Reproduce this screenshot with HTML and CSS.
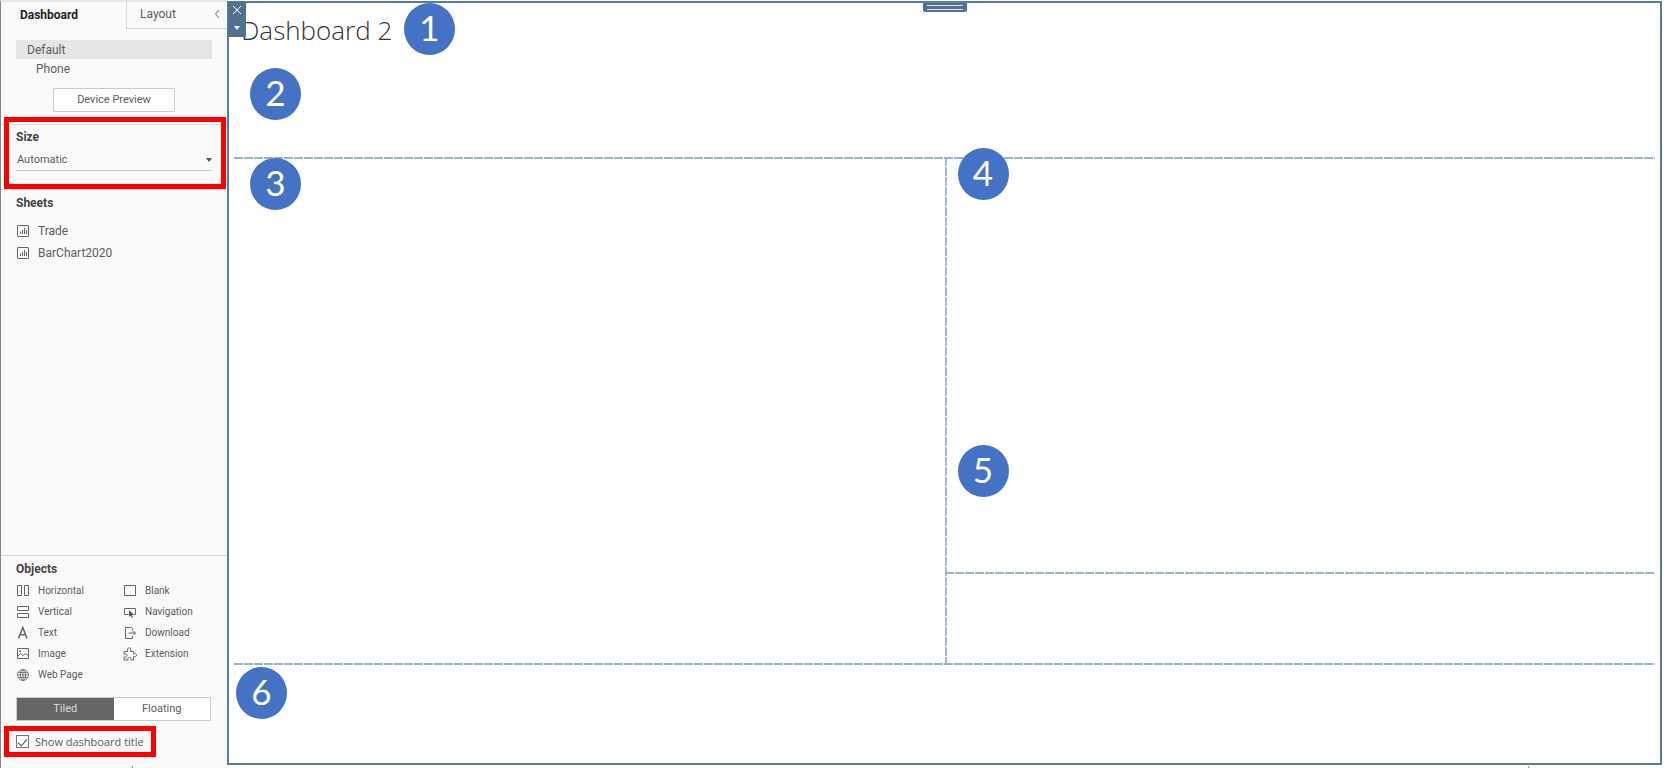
FILE: index.html
```html
<!DOCTYPE html>
<html lang="en">
<head>
<meta charset="utf-8">
<title>Dashboard 2</title>
<link rel="stylesheet" href="styles.css">
</head>
<body>
<div class="app">
  <aside class="sidebar">
    <div class="tabs" role="tablist">
      <button class="tab tab-active" role="tab" aria-selected="true">Dashboard</button>
      <button class="tab tab-layout" role="tab" aria-selected="false">Layout</button>
      <button class="collapse" aria-label="Collapse pane">
        <svg width="6" height="10" viewBox="0 0 6 10"><path d="M5 1 1.500 5 5 9"/></svg>
      </button>
    </div>

    <section class="devices">
      <button class="device device-active">Default</button>
      <button class="device device-child">Phone</button>
      <button class="preview">Device Preview</button>
    </section>

    <section class="size">
      <label class="heading" for="size">Size</label>
      <div class="select-wrap">
        <select id="size"><option>Automatic</option></select>
        <svg class="caret" width="6" height="4" viewBox="0 0 6 4"><path d="M0 0h6L3 4z"/></svg>
      </div>
      <div class="highlight highlight-size"></div>
    </section>

    <section class="sheets">
      <h2 class="heading">Sheets</h2>
      <ul class="sheet-list">
        <li><svg class="icon" width="12" height="12" viewBox="0 0 12 12"><rect x=".5" y=".5" width="11" height="11" rx=".5"/><path d="M3.500 9V6.500M5.500 9V5M7.500 9V3M9.500 9V5"/></svg>Trade</li>
        <li><svg class="icon" width="12" height="12" viewBox="0 0 12 12"><rect x=".5" y=".5" width="11" height="11" rx=".5"/><path d="M3.500 9V6.500M5.500 9V5M7.500 9V3M9.500 9V5"/></svg>BarChart2020</li>
      </ul>
    </section>

    <section class="objects">
      <h2 class="heading">Objects</h2>
      <div class="object-grid">
        <button class="object"><svg class="icon" width="14" height="14" viewBox="0 0 14 14"><path d="M1.500 1.500h4v10h-4zM8.500 1.500h4v10h-4z"/></svg>Horizontal</button>
        <button class="object"><svg class="icon" width="14" height="14" viewBox="0 0 14 14"><path d="M1.500 1.500h11v10h-11z"/></svg>Blank</button>
        <button class="object"><svg class="icon" width="14" height="14" viewBox="0 0 14 14"><path d="M1.500 1.500h11v4h-11zM1.500 8.500h11v4h-11z"/></svg>Vertical</button>
        <button class="object"><svg class="icon" width="14" height="14" viewBox="0 0 14 14"><path d="M5.500 9.500h-4v-6h11v6h-1.500"/><path class="solid" d="M6 5v7l1.700-1.500 1 2.200 1.200-.5-1-2.200h2.300z"/></svg>Navigation</button>
        <button class="object"><svg class="icon" width="14" height="14" viewBox="0 0 14 14"><path class="bold" d="M2.500 12.500 6.800 1.500 11 12.500M4 8.800h5.600"/></svg>Text</button>
        <button class="object"><svg class="icon" width="14" height="14" viewBox="0 0 14 14"><path d="M9.500 4.500v-2l-1-1h-6v11h7V10M5.500 7h7M10.500 5l2 2-2 2"/></svg>Download</button>
        <button class="object"><svg class="icon" width="14" height="14" viewBox="0 0 14 14"><path d="M1.500 1.500h11v10h-11zM1.500 9.500 4.500 6.500 7 8.500l2.500-2 3 2.500"/><path class="solid" d="M3.500 3.500h1.500v1.500h-1.500z"/></svg>Image</button>
        <button class="object"><svg class="icon" width="14" height="14" viewBox="0 0 14 14"><path d="M1 4.500h3.800C4 2.200 4.800.8 6.200.8s2.300 1.400 1.400 3.700h3V7c1.700-.7 3-.1 3 1.200s-1.300 2-3 1.300V13H7.800c.7-1.500 0-2.500-1.400-2.500S4.500 11.500 5 13H1v-3c2 .5 3.300-.3 3.300-1.500S3 6.700 1 7.200z"/></svg>Extension</button>
        <button class="object"><svg class="icon" width="14" height="14" viewBox="0 0 14 14"><g class="thin"><circle cx="7" cy="7" r="5.500"/><ellipse cx="7" cy="7" rx="2.500" ry="5.500"/><path d="M7 1.500v11M2.200 4.500h9.600M1.500 7h11M2.200 9.500h9.600"/></g></svg>Web Page</button>
      </div>
      <div class="mode">
        <button class="mode-option mode-active" aria-pressed="true">Tiled</button>
        <button class="mode-option" aria-pressed="false">Floating</button>
      </div>
      <div class="title-option">
        <input type="checkbox" id="show-title" checked>
        <label for="show-title">Show dashboard title</label>
        <div class="highlight highlight-title"></div>
      </div>
    </section>
  </aside>

  <main class="canvas">
    <div class="zone zone-top">
      <h1 class="title">Dashboard 2</h1>
      <span class="badge badge-1">1</span>
      <span class="badge badge-2">2</span>
    </div>
    <div class="zone-middle">
      <div class="zone zone-left"><span class="badge badge-3">3</span></div>
      <div class="zone-right">
        <div class="zone zone-upper">
          <span class="badge badge-4">4</span>
          <span class="badge badge-5">5</span>
        </div>
        <div class="zone zone-lower"></div>
      </div>
    </div>
    <div class="zone zone-bottom"><span class="badge badge-6">6</span></div>

    <div class="frame-tools">
      <button aria-label="Remove"><svg width="10" height="10" viewBox="0 0 10 10"><path d="m1 1 8 8M9 1 1 9"/></svg></button>
      <button aria-label="More options"><svg width="6" height="4" viewBox="0 0 6 4"><path class="fill" d="M0 0h6L3 4z"/></svg></button>
    </div>
    <div class="grip"></div>
  </main>
  <i class="tick tick-left"></i>
  <i class="tick tick-right"></i>
</div>
</body>
</html>
```
FILE: styles.css
```css
* { box-sizing: border-box; }

body {
  margin: 0;
  background: #fff;
  color: #5c5c5c;
  font: 12px/20px Roboto, "Open Sans", sans-serif;
}

button, select, input { font: inherit; color: inherit; }
button { margin: 0; padding: 0; border: 0; background: none; }
h1, h2, ul { margin: 0; padding: 0; }
svg { display: block; fill: none; stroke: #666; }

.app {
  position: relative;
  display: grid;
  grid-template-columns: 227px 1fr;
  min-height: 100vh;
  padding-right: 8px;
}

/* Side pane */
.sidebar {
  display: flex;
  flex-direction: column;
  border-top: 2px solid #e6e6e6;
  border-left: 1px solid #858292;
  background: #fafafa;
}

.tabs { display: flex; height: 27px; }
.tab { padding-bottom: 2px; }
.tab-active { width: 125px; padding-right: 48px; color: #222; font-weight: 700; text-align: right; }
.tab-layout {
  flex: 1;
  padding-left: 13px;
  border: solid #d4d4d4;
  border-width: 0 0 1px 1px;
  text-align: left;
}
.collapse { width: 20px; padding: 0 0 2px 7px; border-bottom: 1px solid #d4d4d4; }

.devices { display: flex; flex-direction: column; padding: 11px 15px 12px; }
.device { height: 19px; padding: 1px 0 0 11px; line-height: 19px; text-align: left; }
.device-active { background: #e6e6e6; }
.device-child { padding-left: 20px; }
.preview {
  align-self: center;
  width: 122px;
  height: 24px;
  margin-top: 10px;
  border: 1px solid #ccc;
  border-radius: 1px;
  background: #fff;
  font-size: 11px;
}

.heading { display: block; color: #444; font-size: 12px; font-weight: 700; line-height: 20px; }

.size {
  position: relative;
  height: 66px;
  padding: 2px 15px 0;
  border: solid #dcdcdc;
  border-width: 1px 0;
}
.select-wrap { display: flex; align-items: center; margin-top: 3px; border-bottom: 1px solid #ccc; }
.select-wrap select {
  flex: 1;
  height: 20px;
  padding: 0 0 0 1px;
  border: 0;
  background: none;
  font-size: 11px;
  appearance: none;
}
.caret { fill: #555; stroke: none; }

.highlight { position: absolute; border: 5px solid #f00; pointer-events: none; }
.highlight-size { inset: -8px 1px 0 3px; }
.highlight-title { inset: -4px 71px -4px 3px; }

.sheets { flex: 1; padding: 3px 15px; }
.sheet-list { margin-top: 7px; list-style: none; }
.sheet-list li { display: flex; align-items: center; gap: 9px; height: 22px; padding-left: 1px; }

.objects { padding: 3px 0 15px; border-top: 1px solid #d4d4d4; }
.objects .heading { padding-left: 15px; }
.object-grid { display: grid; grid-template-columns: 107px 1fr; grid-auto-rows: 21px; margin-top: 1px; padding-left: 15px; }
.object { display: flex; align-items: center; gap: 8px; font-size: 10px; line-height: 16px; }
.bold { stroke-width: 1.5; }
.thin { stroke-width: .8; }
.solid { fill: #555; stroke: none; }

.mode { display: flex; margin: 12px 16px 0 15px; border: 1px solid #ccc; background: #fff; }
.mode-option { flex: 1; height: 22px; font-size: 11px; }
.mode-active { background: #666; color: #ddd; }

.title-option { position: relative; display: flex; align-items: center; gap: 6px; height: 23px; margin-top: 9px; padding-left: 15px; font: 11px/20px "Open Sans", sans-serif; }
.title-option input {
  width: 13px;
  height: 13px;
  margin: 0;
  border: 1px solid #777;
  appearance: none;
  background: #fff;
  display: grid;
  place-items: center;
}
.title-option input:checked::after {
  content: "";
  width: 4px;
  height: 8px;
  border: solid #444;
  border-width: 0 1px 1px 0;
  transform: rotate(40deg);
}

/* Dashboard canvas */
.canvas {
  position: relative;
  display: grid;
  grid-template-rows: 154fr 506fr 100fr;
  margin: 1px 0 3px;
  padding: 0 5px;
  border: 2px solid #587c9c;
}
.zone { position: relative; }
.zone-middle { position: relative; display: grid; grid-template-columns: 1fr 1fr; }
.zone-right { position: relative; display: grid; grid-template-rows: 415fr 91fr; }

.zone-middle::before, .zone-bottom::before, .zone-lower::before, .zone-right::before {
  content: "";
  position: absolute;
  inset: 0 0 auto;
  height: 2px;
  background: repeating-linear-gradient(90deg, #97b1d1 0 9px, #fff 9px 10px);
}
.zone-right::before {
  inset: 0 auto 0 0;
  width: 2px;
  height: auto;
  background: repeating-linear-gradient(#a3b9d6 0 9px, #fff 9px 10px);
}

.title {
  padding: 10px 0 0 7px;
  color: #333;
  font: 300 26px/34px "Open Sans", sans-serif;
}

.badge {
  position: absolute;
  width: 51px;
  height: 52px;
  border-radius: 50%;
  background: #4472c4;
  color: #fff;
  font: 35px/48px Lato, sans-serif;
  text-align: center;
}
.badge-1 { left: 170px; top: 0; }
.badge-2 { left: 16px; top: 65px; }
.badge-3 { left: 16px; top: 1px; }
.badge-4 { left: 13px; top: -9px; }
.badge-5 { left: 13px; top: 288px; }
.badge-6 { left: 2px; top: 4px; }

.frame-tools {
  position: absolute;
  left: -1px;
  top: -1px;
  display: grid;
  grid-template-rows: 16px 19px;
  width: 18px;
  background: #527191;
}
.frame-tools button { display: grid; place-items: center; }
.frame-tools svg { stroke: #fff; }
.frame-tools .fill { fill: #fff; stroke: none; }

.grip {
  position: absolute;
  top: 0;
  left: 50%;
  width: 44px;
  height: 9px;
  margin-left: -22px;
  border: solid #527191;
  border-width: 2px 4px;
  border-radius: 0 0 2px 2px;
  background: linear-gradient(#dde6ee 0 1px, #527191 1px 4px, #dde6ee 4px 5px);
}

.tick { position: absolute; bottom: 0; width: 1px; height: 2px; background: #999; }
.tick-left { left: 132px; }
.tick-right { right: 141px; }
```
